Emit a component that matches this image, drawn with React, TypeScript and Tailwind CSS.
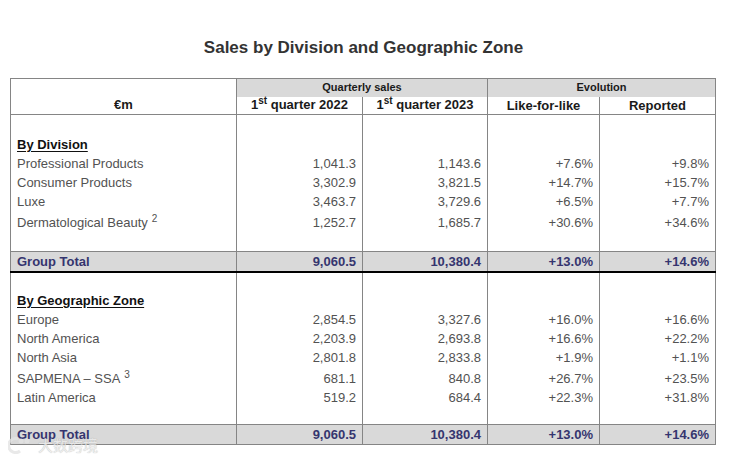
import React from 'react';

type Row = { name: string; sup?: string; q22: string; q23: string; lfl: string; rep: string };

const divisions: Row[] = [
  { name: 'Professional Products', q22: '1,041.3', q23: '1,143.6', lfl: '+7.6%', rep: '+9.8%' },
  { name: 'Consumer Products', q22: '3,302.9', q23: '3,821.5', lfl: '+14.7%', rep: '+15.7%' },
  { name: 'Luxe', q22: '3,463.7', q23: '3,729.6', lfl: '+6.5%', rep: '+7.7%' },
  { name: 'Dermatological Beauty', sup: '2', q22: '1,252.7', q23: '1,685.7', lfl: '+30.6%', rep: '+34.6%' },
];

const zones: Row[] = [
  { name: 'Europe', q22: '2,854.5', q23: '3,327.6', lfl: '+16.0%', rep: '+16.6%' },
  { name: 'North America', q22: '2,203.9', q23: '2,693.8', lfl: '+16.6%', rep: '+22.2%' },
  { name: 'North Asia', q22: '2,801.8', q23: '2,833.8', lfl: '+1.9%', rep: '+1.1%' },
  { name: 'SAPMENA – SSA', sup: '3', q22: '681.1', q23: '840.8', lfl: '+26.7%', rep: '+23.5%' },
  { name: 'Latin America', q22: '519.2', q23: '684.4', lfl: '+22.3%', rep: '+31.8%' },
];

const cell = 'border-x border-[#858585] p-0 px-[6px] leading-[15px]';

function Spacer({ h }: { h: string }) {
  return (
    <tr className={h}>
      {[0, 1, 2, 3, 4].map((i) => (
        <td key={i} className={cell} />
      ))}
    </tr>
  );
}

function DataRow({ row }: { row: Row }) {
  const tall = !!row.sup;
  return (
    <tr className={tall ? 'h-[21px]' : 'h-[19px]'}>
      <td className={`${cell} text-left ${tall ? 'pt-[3px]' : ''}`}>
        {row.name}
        {row.sup && <span className="relative -top-[5px] ml-[4px] text-[10px]">{row.sup}</span>}
      </td>
      {[row.q22, row.q23, row.lfl, row.rep].map((v, i) => (
        <td key={i} className={`${cell} text-right ${tall ? 'pt-[3px]' : ''}`}>
          {v}
        </td>
      ))}
    </tr>
  );
}

function TotalRow({ last }: { last?: boolean }) {
  const border = last ? 'border-b border-b-[#858585]' : 'border-b-2 border-b-black';
  return (
    <tr className="h-[20px] bg-[#d9d9d9] font-bold text-[#35356f]">
      <td className={`${cell} border-t border-t-[#858585] ${border} text-left`}>Group Total</td>
      {['9,060.5', '10,380.4', '+13.0%', '+14.6%'].map((v) => (
        <td key={v} className={`${cell} border-t border-t-[#858585] ${border} text-right`}>
          {v}
        </td>
      ))}
    </tr>
  );
}

function SectionTitle({ label }: { label: string }) {
  return (
    <tr className="h-[19px]">
      <td className={`${cell} text-left font-bold text-[#111] underline underline-offset-2`}>{label}</td>
      {[0, 1, 2, 3].map((i) => (
        <td key={i} className={cell} />
      ))}
    </tr>
  );
}

export default function App() {
  return (
    <div
      className="relative w-[733px] h-[461px] overflow-hidden bg-white"
      style={{ fontFamily: '"Liberation Sans", Arial, sans-serif' }}
    >
      <h1 className="pt-[38px] pr-[6px] text-center text-[17px] leading-[20px] font-bold text-[#333]">
        Sales by Division and Geographic Zone
      </h1>

      <table className="mt-[20px] ml-[10px] w-[705px] table-fixed border-collapse text-[13px] text-[#525252]">
        <colgroup>
          <col className="w-[226px]" />
          <col className="w-[126px]" />
          <col className="w-[125px]" />
          <col className="w-[112px]" />
          <col className="w-[116px]" />
        </colgroup>
        <thead>
          <tr className="h-[18px]">
            <th
              rowSpan={2}
              className="border border-[#858585] p-0 pb-[2px] align-bottom text-center text-[13px] leading-[15px] font-bold text-[#1a1a1a]"
            >
              €m
            </th>
            <th
              colSpan={2}
              className="border-x border-t border-[#858585] bg-[#d9d9d9] p-0 text-center text-[11px] leading-[13px] font-bold text-[#1a1a1a]"
            >
              Quarterly sales
            </th>
            <th
              colSpan={2}
              className="border-x border-t border-[#858585] bg-[#d9d9d9] p-0 text-center text-[11px] leading-[13px] font-bold text-[#1a1a1a]"
            >
              Evolution
            </th>
          </tr>
          <tr className="h-[18px] text-[13px] leading-[15px] font-bold text-[#1a1a1a]">
            {[2022, 2023].map((y) => (
              <th key={y} className="border-x border-b border-[#858585] p-0 text-center">
                1<span className="relative -top-[5px] text-[10px]">st</span> quarter {y}
              </th>
            ))}
            <th className="border-x border-b border-[#858585] p-0 text-center">Like-for-like</th>
            <th className="border-x border-b border-[#858585] p-0 text-center">Reported</th>
          </tr>
        </thead>
        <tbody>
          <Spacer h="h-[20px]" />
          <SectionTitle label="By Division" />
          {divisions.map((r) => (
            <DataRow key={r.name} row={r} />
          ))}
          <Spacer h="h-[20px]" />
          <TotalRow />
          <Spacer h="h-[19px]" />
          <SectionTitle label="By Geographic Zone" />
          {zones.map((r) => (
            <DataRow key={r.name} row={r} />
          ))}
          <Spacer h="h-[18px]" />
          <TotalRow last />
        </tbody>
      </table>

      {/* watermark */}
      <div className="absolute left-[8px] top-[436px] flex items-center gap-[6px] opacity-80">
        <svg width="24" height="18" viewBox="0 0 24 18">
          <path d="M10 3 A7 7 0 1 0 12 15" fill="none" stroke="#e4e4e4" strokeWidth="3" />
          <circle cx="13" cy="5" r="2.5" fill="#e4e4e4" />
          <circle cx="19" cy="5" r="2.5" fill="#e4e4e4" />
        </svg>
        <span
          className="text-[15px] leading-[18px] text-[#ececec]"
          style={{ fontFamily: '"Noto Sans CJK SC", sans-serif', textShadow: '0 0 1px #9a9a9a' }}
        >
          大数跨境
        </span>
      </div>
    </div>
  );
}
